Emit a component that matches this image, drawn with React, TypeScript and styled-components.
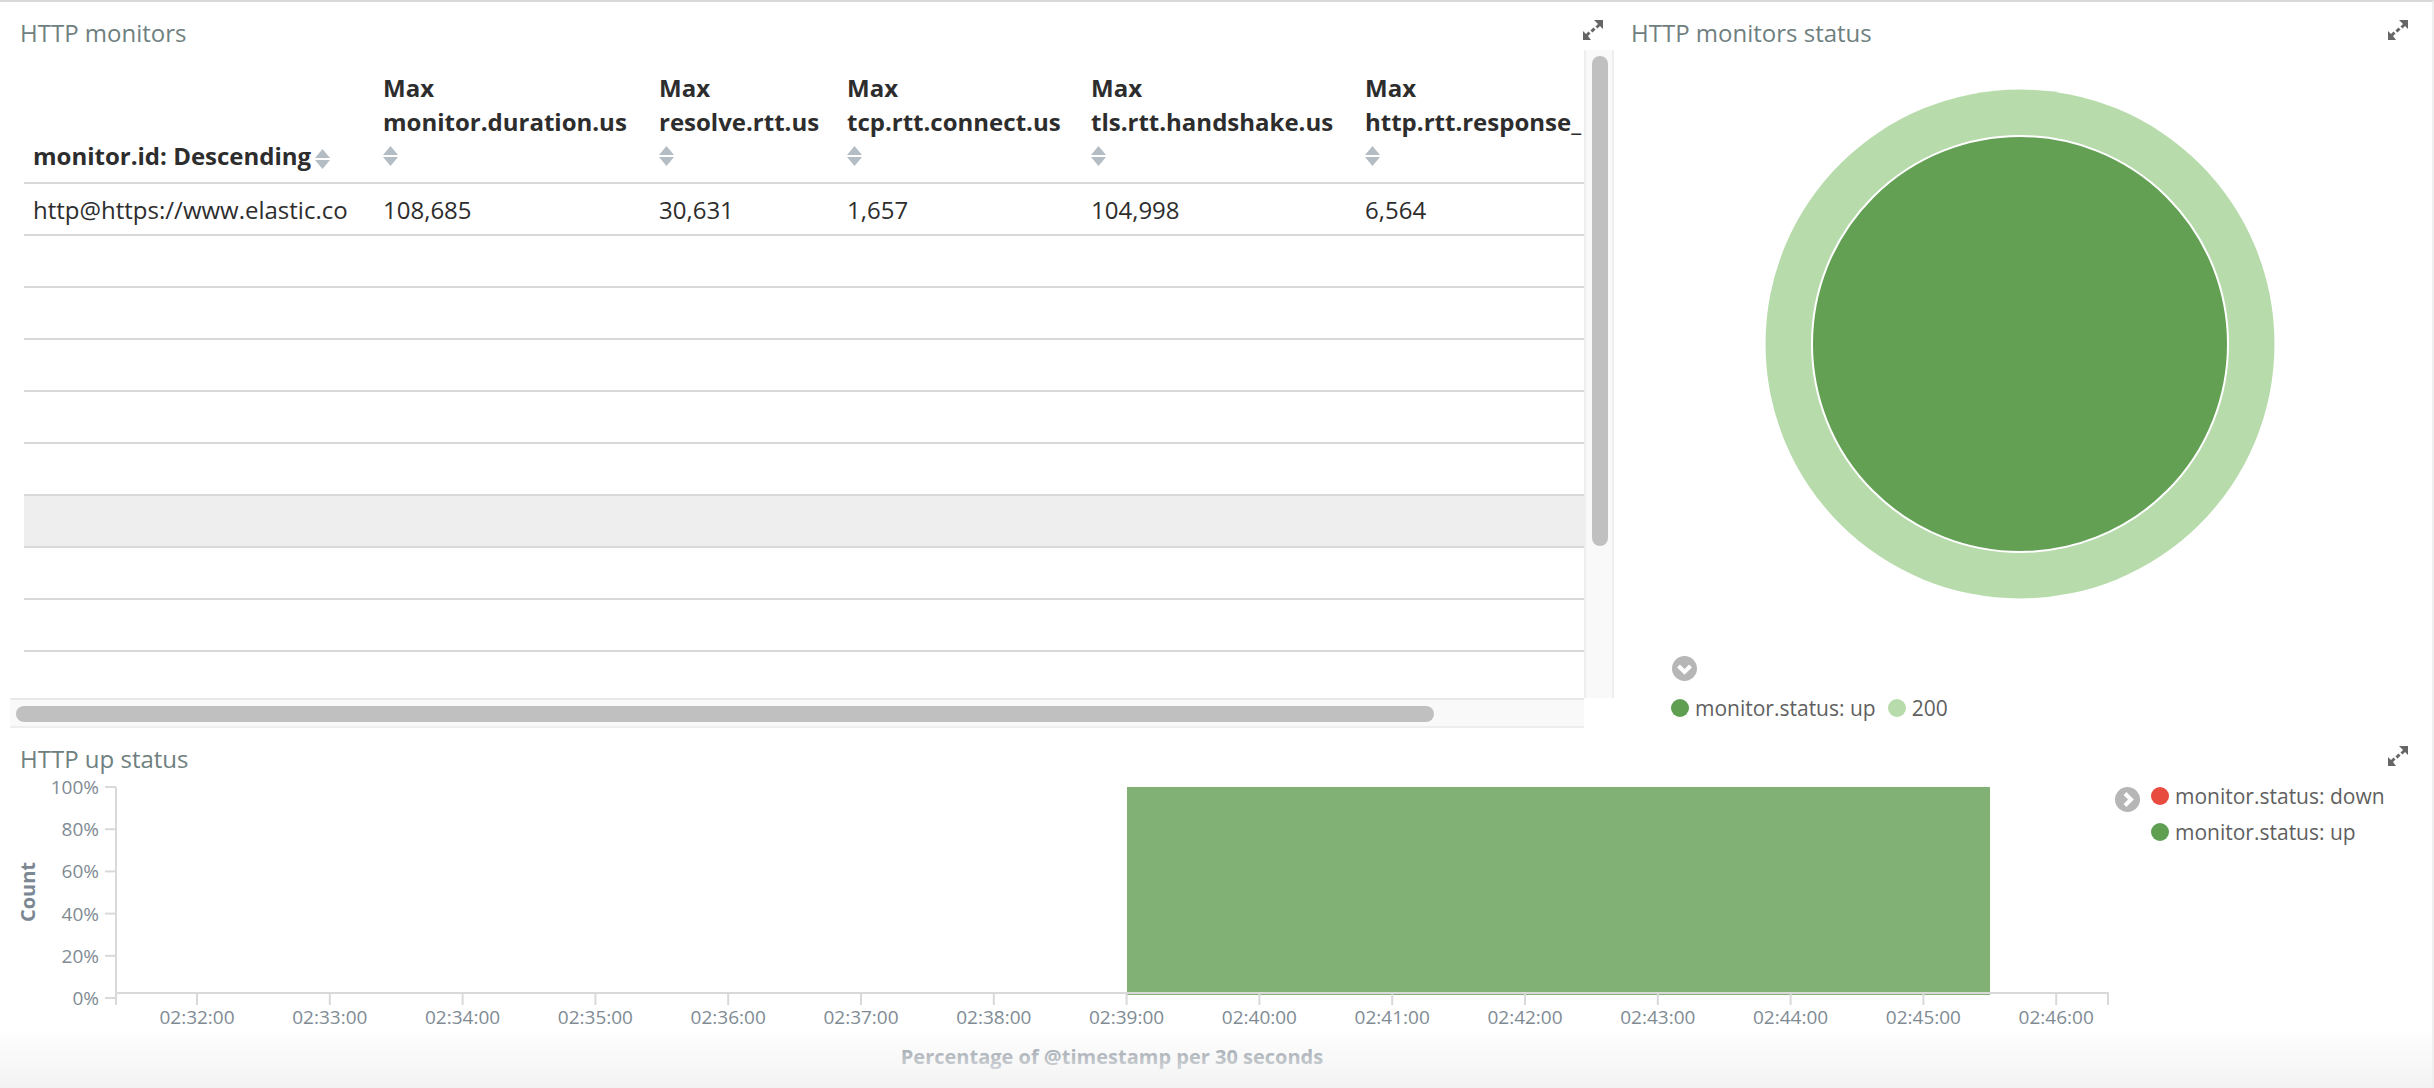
import React from 'react';
import styled, { createGlobalStyle } from 'styled-components';

const GlobalStyle = createGlobalStyle`
  html, body {
    margin: 0;
    padding: 0;
    background: #ffffff;
  }
  * {
    box-sizing: border-box;
  }
`;

const Page = styled.div`
  position: relative;
  width: 2434px;
  height: 1088px;
  overflow: hidden;
  background: #ffffff;
  border-top: 2px solid #d9d9d9;
  border-right: 2px solid #efefef;
  font-family: 'Open Sans', 'Liberation Sans', sans-serif;
`;

const TopRow = styled.div`
  display: flex;
  height: 726px;
`;

const PanelHead = styled.div<{ $height: number }>`
  display: flex;
  align-items: flex-start;
  justify-content: space-between;
  height: ${(p) => p.$height}px;
  padding-top: 18px;
`;

const PanelTitle = styled.h2<{ $left: number }>`
  margin: 0 0 0 ${(p) => p.$left}px;
  font-size: 24px;
  line-height: 26px;
  font-weight: 400;
  color: #6f8080;
`;

const ExpandButton = styled.svg<{ $right: number }>`
  flex: none;
  width: 20px;
  height: 20px;
  margin-right: ${(p) => p.$right}px;
  color: #666666;
`;

const TablePanel = styled.section`
  flex: none;
  width: 1620px;
  padding-left: 10px;
`;

const TableBody = styled.div`
  display: flex;
  height: 648px;
`;

const TablePort = styled.div`
  flex: none;
  width: 1560px;
  height: 648px;
  margin-left: 14px;
  overflow: hidden;
`;

const Table = styled.table`
  width: 1560px;
  table-layout: fixed;
  border-collapse: separate;
  border-spacing: 0;
  color: #2d2d2d;
  font-size: 24px;
`;

const HeadCell = styled.th<{ $width: number }>`
  width: ${(p) => p.$width}px;
  height: 134px;
  padding: 0 0 9px 9px;
  overflow: hidden;
  border-bottom: 2px solid #d9d9d9;
  vertical-align: bottom;
  text-align: left;
  white-space: nowrap;
  font-weight: 700;
  line-height: 34px;
`;

const Cell = styled.td`
  height: 52px;
  padding: 0 0 0 9px;
  overflow: hidden;
  border-bottom: 2px solid #d9d9d9;
  white-space: nowrap;
  font-weight: 400;
`;

const Row = styled.tr<{ $shaded?: boolean }>`
  background: ${(p) => (p.$shaded ? '#eeeeee' : 'transparent')};
`;

const SortMark = styled.svg<{ $inline?: boolean }>`
  display: ${(p) => (p.$inline ? 'inline-block' : 'block')};
  width: 15px;
  height: 20px;
  margin: ${(p) => (p.$inline ? '0 0 0 4px' : '7px 0 7px 0')};
  vertical-align: -4px;
  color: #b4bcc4;
`;

const VerticalTrack = styled.div`
  flex: none;
  width: 30px;
  padding: 6px 0 0 6px;
  background: #f9f9f9;
  border-left: 2px solid #eeeeee;
  border-right: 2px solid #eeeeee;
`;

const VerticalThumb = styled.div`
  width: 16px;
  height: 490px;
  border-radius: 8px;
  background: #c0c0c0;
`;

const HorizontalTrack = styled.div`
  width: 1574px;
  height: 30px;
  padding: 6px 0 0 6px;
  background: #f9f9f9;
  border-top: 2px solid #e8e8e8;
  border-bottom: 2px solid #eeeeee;
`;

const HorizontalThumb = styled.div`
  width: 1418px;
  height: 16px;
  border-radius: 8px;
  background: #c0c0c0;
`;

const DonutPanel = styled.section`
  flex: 1;
  min-width: 0;
`;

const DonutArea = styled.div`
  display: flex;
  align-items: center;
  justify-content: center;
  height: 588px;
  padding-right: 12px;
`;

const Donut = styled.svg`
  width: 510px;
  height: 510px;
`;

const ToggleIcon = styled.svg<{ $margin: string }>`
  display: block;
  flex: none;
  width: 25px;
  height: 25px;
  margin: ${(p) => p.$margin};
`;

const InlineLegend = styled.div`
  display: flex;
  gap: 12px;
  margin: 9px 0 0 51px;
`;

const LegendEntry = styled.div`
  display: flex;
  align-items: center;
  gap: 6px;
  height: 36px;
  color: #5f5f5f;
  font-size: 21px;
  white-space: nowrap;
`;

const Dot = styled.span<{ $color: string }>`
  flex: none;
  width: 18px;
  height: 18px;
  border-radius: 50%;
  background: ${(p) => p.$color};
`;

const BottomPanel = styled.section`
  height: 360px;
`;

const ChartRow = styled.div`
  display: flex;
`;

const Chart = styled.svg`
  flex: none;
  width: 2115px;
  height: 300px;
`;

const AxisLabel = styled.text`
  fill: #808b94;
  font-size: 19px;
`;

const AxisTitle = styled.text`
  fill: #7b8792;
  font-size: 20px;
  font-weight: 700;
`;

const SideLegend = styled.div`
  display: flex;
  gap: 11px;
`;

const LegendList = styled.div`
  display: flex;
  flex-direction: column;
`;

const BottomFade = styled.div`
  position: absolute;
  left: 0;
  right: 0;
  bottom: 0;
  height: 62px;
  background: linear-gradient(to bottom, rgba(243, 243, 243, 0), #f3f3f3);
  pointer-events: none;
`;

const columns = [
  { name: 'monitor.id: Descending', width: 350, value: 'http@https://www.elastic.co' },
  { name: 'monitor.duration.us', width: 276, value: '108,685' },
  { name: 'resolve.rtt.us', width: 188, value: '30,631' },
  { name: 'tcp.rtt.connect.us', width: 244, value: '1,657' },
  { name: 'tls.rtt.handshake.us', width: 274, value: '104,998' },
  { name: 'http.rtt.response_', width: 228, value: '6,564' },
];

const emptyRows = [0, 1, 2, 3, 4, 5, 6, 7, 8];
const percentTicks = ['100%', '80%', '60%', '40%', '20%', '0%'];
const timeTicks = [
  '02:32:00', '02:33:00', '02:34:00', '02:35:00', '02:36:00', '02:37:00', '02:38:00', '02:39:00',
  '02:40:00', '02:41:00', '02:42:00', '02:43:00', '02:44:00', '02:45:00', '02:46:00',
];

const ExpandIcon = ({ right }: { right: number }) => (
  <ExpandButton $right={right} viewBox="0 0 20 20">
    <path fill="currentColor" d="M11 0h9v9l-3-3-2.5 2.5-2-2L15 4zM0 20v-9l3 3 2.5-2.5 2 2L5 16l3 4z" />
    <path stroke="currentColor" strokeWidth="3" d="M8.5 11.5l3-3" />
  </ExpandButton>
);

const Sort = ({ inline }: { inline?: boolean }) => (
  <SortMark $inline={inline} viewBox="0 0 15 20">
    <path fill="currentColor" d="M7.5 0L15 9H0zM0 11h15l-7.5 9z" />
  </SortMark>
);

const Toggle = ({ dir, margin }: { dir: 'down' | 'right'; margin: string }) => (
  <ToggleIcon $margin={margin} viewBox="0 0 25 25">
    <circle cx="12.5" cy="12.5" r="12.5" fill="#b6b6b6" />
    <path
      fill="none"
      stroke="#ffffff"
      strokeWidth="4"
      d={dir === 'down' ? 'M6.5 10l6 6 6-6' : 'M10 6.5l6 6-6 6'}
    />
  </ToggleIcon>
);

const UpChart = () => (
  <Chart viewBox="0 0 2115 300">
    <rect x="1127" y="9" width="863" height="208" fill="#82b176" />
    {percentTicks.map((label, i) => {
      const y = 9 + i * 42.2;
      return (
        <g key={label}>
          <path d={`M105 ${y}h11`} stroke="#d9d9d9" strokeWidth="2" />
          <AxisLabel x="99" y={y + 7} textAnchor="end">{label}</AxisLabel>
        </g>
      );
    })}
    <path d="M116 9v218M116 215h1992v12" fill="none" stroke="#d9d9d9" strokeWidth="2" />
    {timeTicks.map((label, i) => {
      const x = 197 + i * 132.8;
      return (
        <g key={label}>
          <path d={`M${x} 215v12`} stroke="#d9d9d9" strokeWidth="2" />
          <AxisLabel x={x} y="246" textAnchor="middle">{label}</AxisLabel>
        </g>
      );
    })}
    <AxisTitle x="1112" y="286" textAnchor="middle">Percentage of @timestamp per 30 seconds</AxisTitle>
    <AxisTitle transform="translate(35 114) rotate(-90)" textAnchor="middle">Count</AxisTitle>
  </Chart>
);

const App: React.FC = () => (
  <Page>
    <GlobalStyle />
    <TopRow>
      <TablePanel>
        <PanelHead $height={48}>
          <PanelTitle $left={10}>HTTP monitors</PanelTitle>
          <ExpandIcon right={17} />
        </PanelHead>
        <TableBody>
          <TablePort>
            <Table>
              <thead>
                <tr>
                  {columns.map((col, i) => (
                    <HeadCell key={col.name} $width={col.width}>
                      {i === 0 ? (
                        <>
                          {col.name}
                          <Sort inline />
                        </>
                      ) : (
                        <>
                          Max
                          <br />
                          {col.name}
                          <Sort />
                        </>
                      )}
                    </HeadCell>
                  ))}
                </tr>
              </thead>
              <tbody>
                <Row>
                  {columns.map((col) => (
                    <Cell key={col.name}>{col.value}</Cell>
                  ))}
                </Row>
                {emptyRows.map((r) => (
                  <Row key={r} $shaded={r === 5}>
                    <Cell colSpan={columns.length} />
                  </Row>
                ))}
              </tbody>
            </Table>
          </TablePort>
          <VerticalTrack>
            <VerticalThumb />
          </VerticalTrack>
        </TableBody>
        <HorizontalTrack>
          <HorizontalThumb />
        </HorizontalTrack>
      </TablePanel>
      <DonutPanel>
        <PanelHead $height={48}>
          <PanelTitle $left={11}>HTTP monitors status</PanelTitle>
          <ExpandIcon right={24} />
        </PanelHead>
        <DonutArea>
          <Donut viewBox="0 0 510 510">
            <circle cx="255" cy="255" r="254.5" fill="#b8dbac" />
            <circle cx="255" cy="255" r="208" fill="#63a054" stroke="#ffffff" strokeWidth="2" />
          </Donut>
        </DonutArea>
        <Toggle dir="down" margin="18px 0 0 52px" />
        <InlineLegend>
          <LegendEntry>
            <Dot $color="#5f9f52" />
            monitor.status: up
          </LegendEntry>
          <LegendEntry>
            <Dot $color="#b8dbac" />
            200
          </LegendEntry>
        </InlineLegend>
      </DonutPanel>
    </TopRow>
    <BottomPanel>
      <PanelHead $height={50}>
        <PanelTitle $left={20}>HTTP up status</PanelTitle>
        <ExpandIcon right={24} />
      </PanelHead>
      <ChartRow>
        <UpChart />
        <SideLegend>
          <Toggle dir="right" margin="9px 0 0 0" />
          <LegendList>
            <LegendEntry>
              <Dot $color="#e74c3f" />
              monitor.status: down
            </LegendEntry>
            <LegendEntry>
              <Dot $color="#5f9f52" />
              monitor.status: up
            </LegendEntry>
          </LegendList>
        </SideLegend>
      </ChartRow>
    </BottomPanel>
    <BottomFade />
  </Page>
);

export default App;
